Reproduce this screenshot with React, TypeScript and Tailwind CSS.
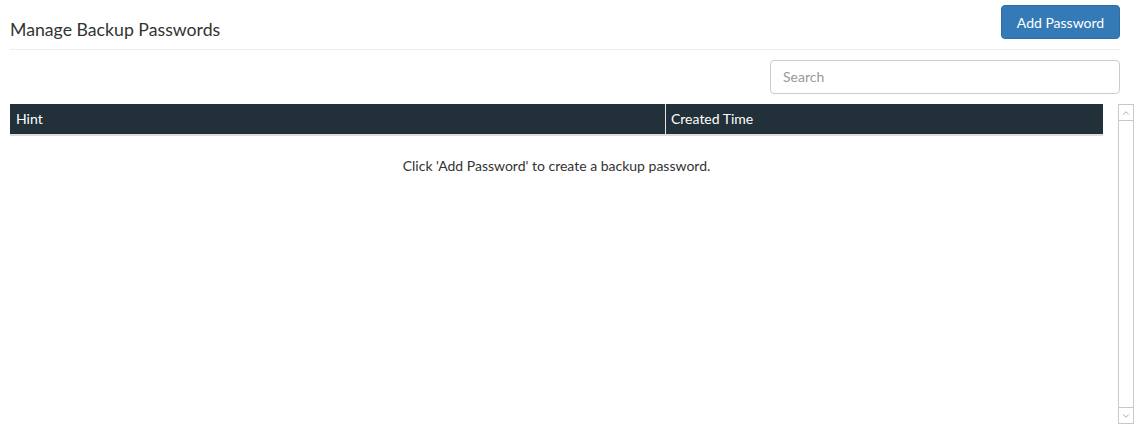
import { ChevronUp, ChevronDown } from "lucide-react";

export default function App() {
  return (
    <div className="w-[1139px] h-[428px] bg-white text-[#333] font-['Lato','Liberation_Sans',sans-serif] overflow-hidden">
      <div className="ml-[10px] mr-[19px] h-[50px] flex justify-between border-b border-[#eee]">
        <h1 className="self-end mb-[7px] text-[17.7px] leading-[24px] font-normal">Manage Backup Passwords</h1>
        <button className="self-start mt-[5px] h-[34px] w-[119px] rounded-[4px] bg-[#337ab7] border border-[#2e6da4] text-white text-[14px]">
          Add Password
        </button>
      </div>

      <div className="mr-[19px] mt-[10px] flex justify-end">
        <input
          placeholder="Search"
          className="w-[350px] h-[34px] px-[12px] pb-[1px] rounded-[4px] border border-[#ccc] text-[14px] placeholder:text-[#999] outline-none"
        />
      </div>

      <div className="mt-[10px] ml-[10px] mr-[5px] flex gap-[15px]">
        <div className="flex-1">
          <div className="flex h-[32px] bg-[#22303a] border-b-2 border-[#ddd] text-white text-[14px]">
            <div className="w-[655px] pl-[6px] pb-[2px] flex items-center">Hint</div>
            <div className="flex-1 border-l border-[#e5e5e5] pl-[5px] pb-[2px] flex items-center">Created Time</div>
          </div>
          <div className="h-[58px] flex items-center justify-center text-[14px]">
            Click 'Add Password' to create a backup password.
          </div>
        </div>
        <div className="w-[16px] h-[320px] border border-[#c8c8c8] flex flex-col justify-between">
          <div className="h-[16px] border-b border-[#c8c8c8] flex items-center justify-center">
            <ChevronUp className="w-[10px] h-[10px] text-[#999]" strokeWidth={2} />
          </div>
          <div className="h-[16px] border-t border-[#c8c8c8] flex items-center justify-center">
            <ChevronDown className="w-[10px] h-[10px] text-[#999]" strokeWidth={2} />
          </div>
        </div>
      </div>
    </div>
  );
}
